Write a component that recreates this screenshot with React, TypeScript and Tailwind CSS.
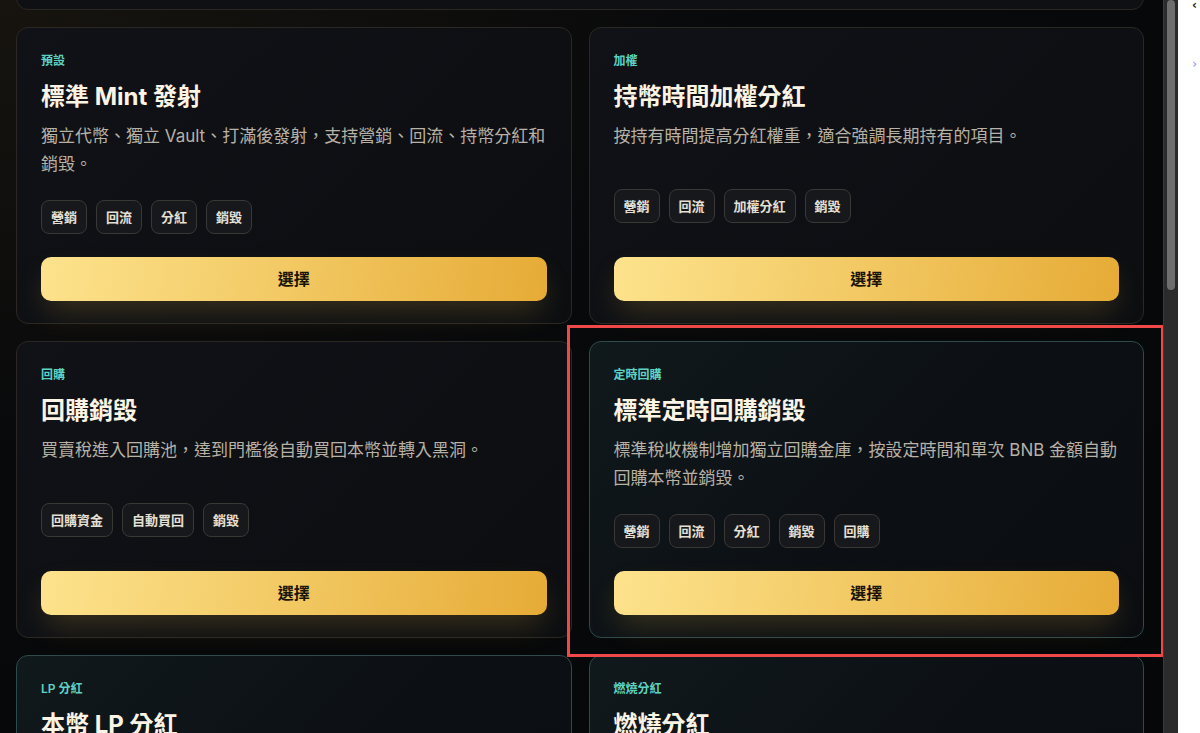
const CARDS = [
  {
    label: "預設",
    title: "標準 Mint 發射",
    desc: "獨立代幣、獨立 Vault、打滿後發射，支持營銷、回流、持幣分紅和銷毀。",
    tags: ["營銷", "回流", "分紅", "銷毀"],
    accent: false,
  },
  {
    label: "加權",
    title: "持幣時間加權分紅",
    desc: "按持有時間提高分紅權重，適合強調長期持有的項目。",
    tags: ["營銷", "回流", "加權分紅", "銷毀"],
    accent: false,
  },
  {
    label: "回購",
    title: "回購銷毀",
    desc: "買賣稅進入回購池，達到門檻後自動買回本幣並轉入黑洞。",
    tags: ["回購資金", "自動買回", "銷毀"],
    accent: false,
  },
  {
    label: "定時回購",
    title: "標準定時回購銷毀",
    desc: "標準稅收機制增加獨立回購金庫，按設定時間和單次 BNB 金額自動回購本幣並銷毀。",
    tags: ["營銷", "回流", "分紅", "銷毀", "回購"],
    accent: true,
  },
  {
    label: "LP 分紅",
    title: "本幣 LP 分紅",
    desc: "LP 持有者按比例獲得分紅。",
    tags: ["營銷", "LP 分紅"],
    accent: true,
  },
  {
    label: "燃燒分紅",
    title: "燃燒分紅",
    desc: "燃燒本幣獲得分紅權重。",
    tags: ["營銷", "燃燒", "分紅"],
    accent: true,
  },
];

type Card = (typeof CARDS)[number];

export default function App() {
  return (
    <div className="flex h-[733px] w-[1200px] overflow-hidden bg-white font-['Inter','Noto_Sans_CJK_TC',sans-serif]">
      <main className="relative h-full w-[1163px] overflow-hidden bg-[radial-gradient(ellipse_at_top_left,#17140f_0%,#08090b_45%,#060708_100%)]">
        <div className="flex flex-col gap-[17px] pl-4 pr-[19px]">
          {/* previous card, scrolled mostly out of view */}
          <div className="-mt-[200px] h-[210px] rounded-xl border border-[#2b2823] bg-[#0e1014]" />
          <div className="grid grid-cols-2 gap-[17px]">
            {CARDS.map((c) => (
              <TemplateCard key={c.title} card={c} />
            ))}
          </div>
        </div>
        <div className="pointer-events-none absolute left-[567px] top-[325px] h-[332px] w-[597px] border-[3px] border-[#ef4848]" />
      </main>
      <div className="h-full w-[15px] border-l border-[#3a3a3a] bg-[#2b2b2b] pl-[3px]">
        <div className="h-[290px] w-2 rounded-full bg-[#6e6e6e]" />
      </div>
      <div className="flex h-full flex-1 flex-col items-end pr-[3px] font-['DejaVu_Sans',sans-serif]">
        <span className="mt-[-1px] text-[12px] font-bold leading-3 text-[#222]">‹</span>
        <span className="mt-[47px] text-[12px] leading-3 text-[#8b8ef0]">›</span>
      </div>
    </div>
  );
}

function TemplateCard({ card }: { card: Card }) {
  return (
    <div
      className={
        card.accent
          ? "flex h-[297px] flex-col rounded-xl border border-[#2e4a4c] bg-[linear-gradient(135deg,#10191c_0%,#0c1014_50%,#0b0d11_100%)] px-6 pb-[22px] pt-[25px]"
          : "flex h-[297px] flex-col rounded-xl border border-[#2b2823] bg-[linear-gradient(135deg,#101217_0%,#0d0f13_60%,#0c0e11_100%)] px-6 pb-[22px] pt-[25px]"
      }
    >
      <p className="text-xs font-semibold leading-4 text-[#5fd3c3]">{card.label}</p>
      <h3 className="mt-3 text-2xl font-bold leading-8 text-[#fbf4e4]">{card.title}</h3>
      <p className="mt-[9px] min-h-[41px] text-[17px] leading-7 text-[#b8b1a5]">{card.desc}</p>
      <div className="mt-[26px] flex gap-[9px]">
        {card.tags.map((t) => (
          <span
            key={t}
            className="rounded-lg border border-[#3a3835] bg-[#16181c] px-[9px] py-1.5 text-[13px] font-bold leading-5 text-[#e6e0d4]"
          >
            {t}
          </span>
        ))}
      </div>
      <div className="mt-auto pt-[23px]">
        <button className="h-11 w-full rounded-[10px] bg-[linear-gradient(100deg,#fde38d_0%,#f2c862_50%,#e6ab36_100%)] text-base font-bold text-[#1a1409] shadow-[0_14px_30px_-6px_rgba(240,185,70,0.22)]">
          選擇
        </button>
      </div>
    </div>
  );
}
